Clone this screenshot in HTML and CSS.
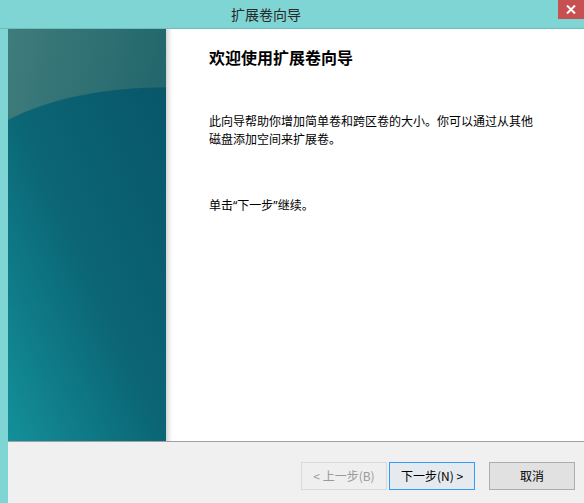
FILE: index.html
```html
<!DOCTYPE html>
<html lang="zh-CN">
<head>
<meta charset="utf-8">
<title>扩展卷向导</title>
<link rel="stylesheet" href="styles.css">
</head>
<body>
<div class="window">
  <div class="titlebar">
    <span class="title">扩展卷向导</span>
    <div class="close" aria-label="关闭">
      <svg width="10" height="9" viewBox="0 0 10 9"><path d="M1 0.5 L9 8.5 M9 0.5 L1 8.5" stroke="#fff" stroke-width="2" fill="none"/></svg>
    </div>
  </div>
  <div class="frame">
    <div class="main">
      <div class="banner">
        <svg width="158" height="413" viewBox="0 0 158 413" preserveAspectRatio="none">
          <defs>
            <linearGradient id="top" x1="0" y1="0" x2="1" y2="0.5">
              <stop offset="0" stop-color="#3f7c7c"/>
              <stop offset="1" stop-color="#1d6369"/>
            </linearGradient>
            <linearGradient id="bot" x1="1" y1="0" x2="0" y2="1">
              <stop offset="0" stop-color="#08566a"/>
              <stop offset="0.5" stop-color="#0b6574"/>
              <stop offset="1" stop-color="#13909a"/>
            </linearGradient>
          </defs>
          <rect x="0" y="0" width="158" height="413" fill="url(#top)"/>
          <path d="M0 91 C 40 70, 95 58, 158 58 L158 413 L0 413 Z" fill="url(#bot)"/>
          <path d="M0 91 C 40 70, 95 58, 158 58" stroke="#2c7276" stroke-width="1" fill="none" opacity="0.5"/>
        </svg>
      </div>
      <div class="shade"></div>
      <div class="content">
        <h1 class="heading">欢迎使用扩展卷向导</h1>
        <p class="text">此向导帮助你增加简单卷和跨区卷的大小。你可以通过从其他<br>磁盘添加空间来扩展卷。</p>
        <p class="text hint">单击<span class="q">“</span>下一步<span class="q">”</span>继续。</p>
      </div>
    </div>
    <div class="footer">
      <button class="btn disabled" type="button">&lt; 上一步(B)</button>
      <button class="btn primary" type="button">下一步(N) &gt;</button>
      <button class="btn cancel" type="button">取消</button>
    </div>
  </div>
</div>
</body>
</html>
```

FILE: styles.css
```css
* { box-sizing: border-box; }
html, body {
  margin: 0;
  padding: 0;
  width: 584px;
  height: 503px;
  overflow: hidden;
}
body {
  background: #7fd4d4;
  font-family: "Noto Sans CJK SC", "Noto Sans", sans-serif;
  color: #000;
}
.window {
  display: flex;
  flex-direction: column;
  width: 584px;
  height: 503px;
}
.titlebar {
  position: relative;
  height: 29px;
  border-bottom: 1px solid #6dbdbd;
  display: flex;
  align-items: center;
  justify-content: center;
  padding-right: 52px;
  background: #7fd4d4;
}
.title {
  font-size: 14px;
  color: #2a2a2a;
  line-height: 28px;
}
.close {
  position: absolute;
  top: 0;
  right: 0;
  width: 26px;
  height: 19px;
  background: #c75050;
  display: flex;
  align-items: center;
  justify-content: center;
}
.close svg { display: block; }
.frame {
  flex: 1;
  margin-left: 8px;
  display: flex;
  flex-direction: column;
  background: #fff;
}
.main {
  height: 412px;
  display: flex;
  background: #fff;
}
.banner {
  width: 158px;
  flex: none;
}
.banner svg { display: block; }
.shade {
  width: 7px;
  flex: none;
  background: linear-gradient(to right, #d4d4d4, #ebebeb 40%, #fafafa 80%, #fff);
}
.content {
  flex: 1;
  padding: 18px 0 0 36px;
}
.heading {
  margin: 0;
  font-size: 16px;
  font-weight: bold;
  line-height: 20px;
}
.text {
  margin: 45px 0 0;
  font-size: 12px;
  line-height: 18px;
}
.text.hint {
  margin-top: 48px;
}
.q {
  font-family: "Noto Sans", "Liberation Sans", sans-serif;
}
.footer {
  flex: 1;
  background: #f0f0f0;
  border-top: 1px solid #a0a0a0;
  display: flex;
  align-items: flex-start;
  justify-content: flex-end;
  padding: 20px 9px 0 0;
}
.btn {
  width: 86px;
  height: 28px;
  font-family: "Noto Sans CJK SC", "Noto Sans", sans-serif;
  font-size: 12px;
  line-height: 16px;
  padding: 0;
  background: #e1e1e1;
  border: 1px solid #adadad;
  color: #000;
  margin: 0;
}
.btn.disabled {
  background: #efefef;
  border-color: #d9d9d9;
  color: #9a9a9a;
}
.btn.primary {
  margin-left: 2px;
  border-color: #3399ff;
  background: #e5eaef;
}
.btn.cancel {
  margin-left: 14px;
}
```
